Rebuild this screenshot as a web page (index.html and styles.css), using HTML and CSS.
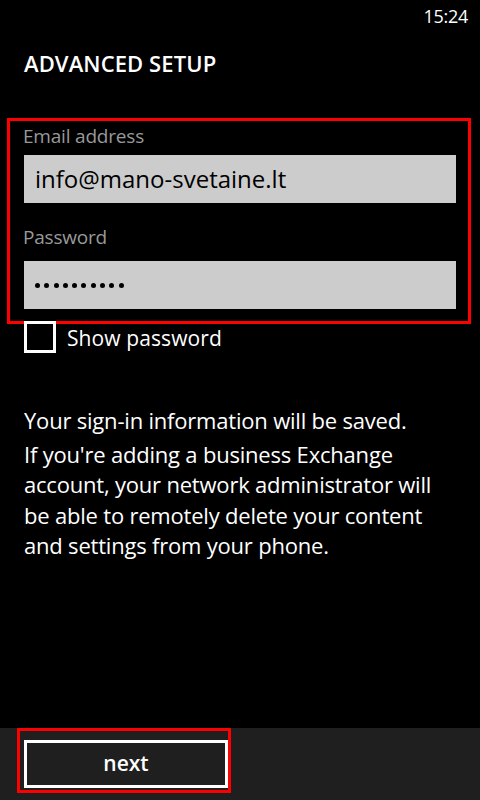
FILE: index.html
```html
<!DOCTYPE html>
<html>
<head>
<meta charset="utf-8">
<link rel="stylesheet" href="styles.css">
</head>
<body>
<div class="screen">
  <div class="status">15:24</div>
  <h1 class="title">ADVANCED SETUP</h1>
  <div class="highlight fields">
    <div class="label">Email address</div>
    <div class="input">info@mano-svetaine.lt</div>
    <div class="label label-pw">Password</div>
    <div class="input pw">
      <span class="dots"><i></i><i></i><i></i><i></i><i></i><i></i><i></i><i></i><i></i><i></i></span>
    </div>
  </div>
  <div class="check-row">
    <span class="checkbox"></span>
    <span class="check-label">Show password</span>
  </div>
  <p class="info first">Your sign-in information will be saved.</p>
  <p class="info">If you're adding a business Exchange account, your network administrator will be able to remotely delete your content and settings from your phone.</p>
  <div class="spacer"></div>
  <div class="appbar">
    <div class="highlight btn-wrap">
      <div class="btn">next</div>
    </div>
  </div>
</div>
</body>
</html>
```
FILE: styles.css
```css
html, body {
  margin: 0;
  padding: 0;
  background: #000;
}
.screen {
  width: 480px;
  height: 800px;
  display: flex;
  flex-direction: column;
  font-family: "Open Sans", "Noto Sans", sans-serif;
  color: #fff;
  overflow: hidden;
}
.status {
  height: 32px;
  line-height: 32px;
  text-align: right;
  padding-right: 12px;
  font-size: 18px;
  letter-spacing: -0.3px;
}
.title {
  margin: 16px 0 0 24px;
  font-size: 22px;
  line-height: 30px;
  font-weight: 600;
  letter-spacing: 0.1px;
}
.highlight {
  border: 3px solid #ff0000;
}
.fields {
  margin: 40px 9px 0 7px;
  padding: 0 12px 12px 13px;
  display: flex;
  flex-direction: column;
}
.label {
  color: #999;
  font-size: 19px;
  line-height: 28px;
  letter-spacing: -0.2px;
  margin-top: 1px;
}
.label-pw {
  margin-top: 20px;
}
.input {
  margin: 5px 0 0 1px;
  height: 48px;
  background: #cccccc;
  color: #000;
  font-size: 24px;
  line-height: 48px;
  padding-left: 11px;
}
.pw {
  display: flex;
  align-items: center;
  margin-top: 10px;
}
.dots {
  display: flex;
  gap: 4.3px;
}
.dots i {
  display: block;
  width: 5px;
  height: 5px;
  border-radius: 50%;
  background: #000;
}
.check-row {
  display: flex;
  align-items: center;
  margin: -3px 0 0 24px;
  height: 32px;
}
.checkbox {
  width: 26px;
  height: 26px;
  border: 3px solid #fff;
}
.check-label {
  margin-left: 11px;
  font-size: 21px;
  letter-spacing: 0.1px;
  line-height: 30px;
  margin-top: 2px;
}
.info {
  margin: 0 24px;
  font-size: 22px;
  line-height: 30.5px;
  letter-spacing: -0.2px;
}
.info.first {
  margin-top: 52px;
  margin-bottom: 3px;
}
.spacer {
  flex: 1;
}
.appbar {
  height: 72px;
  background: #1f1f1f;
  display: flex;
  align-items: flex-start;
}
.btn-wrap {
  margin-left: 17px;
  width: 214px;
  padding: 9px 0 0 4px;
  box-sizing: border-box;
  height: 65px;
}
.btn {
  width: 198px;
  height: 42px;
  border: 3px solid #fff;
  text-align: center;
  font-size: 21px;
  font-weight: 600;
  line-height: 40px;
}
```
